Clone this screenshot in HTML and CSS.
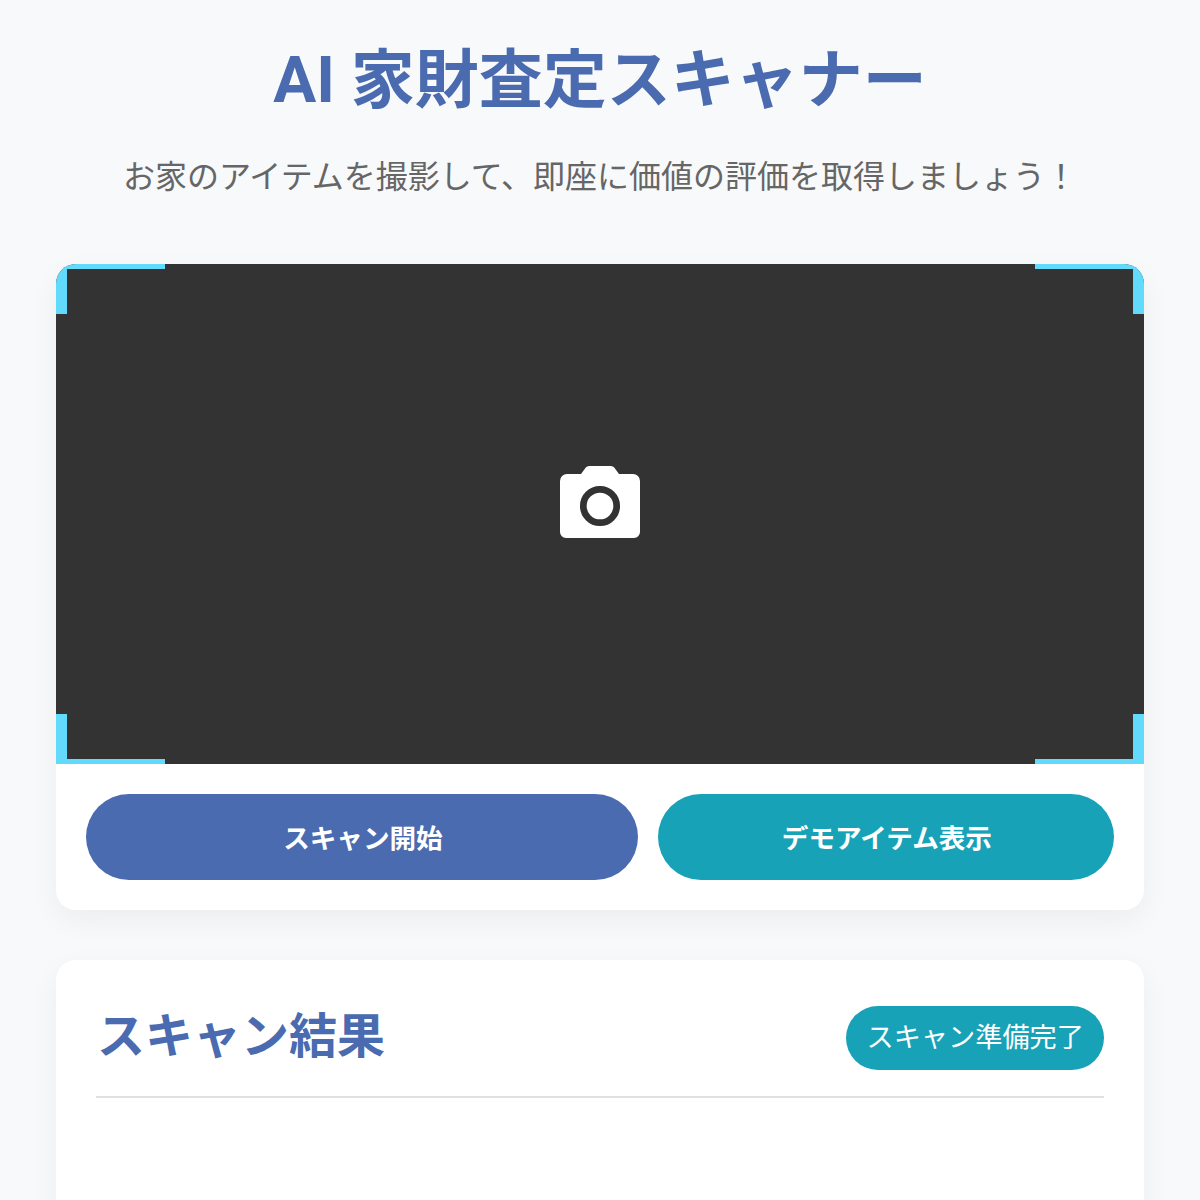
FILE: index.html
```html
<!DOCTYPE html>
<html lang="ja">
<head>
<meta charset="utf-8">
<title>AI 家財査定スキャナー</title>
<link rel="stylesheet" href="styles.css">
</head>
<body>
<div class="container">
  <header class="header">
    <h1 class="title">AI 家財査定スキャナー</h1>
    <p class="subtitle">お家のアイテムを撮影して、即座に価値の評価を取得しましょう！</p>
  </header>
  <section class="scanner">
    <div class="viewport">
      <span class="corner tl"></span>
      <span class="corner tr"></span>
      <span class="corner bl"></span>
      <span class="corner br"></span>
      <svg class="camera" viewBox="0 0 80 72" width="80" height="72" aria-hidden="true">
        <path fill="#fff" d="M29 0h22a4 4 0 0 1 3.200 1.600L59 8h14a7 7 0 0 1 7 7v51a6 6 0 0 1-6 6H6a6 6 0 0 1-6-6V15a7 7 0 0 1 7-7h14l4.800-6.400A4 4 0 0 1 29 0Z"/>
        <circle cx="40" cy="40" r="16.700" fill="none" stroke="#333" stroke-width="6.700"/>
      </svg>
    </div>
    <div class="controls">
      <button class="btn primary">スキャン開始</button>
      <button class="btn secondary">デモアイテム表示</button>
    </div>
  </section>
  <section class="results">
    <div class="results-head">
      <h2 class="results-title">スキャン結果</h2>
      <span class="status">スキャン準備完了</span>
    </div>
  </section>
</div>
</body>
</html>
```
FILE: styles.css
```css
* { box-sizing: border-box; }
html, body { margin: 0; height: 1200px; overflow: hidden; }
body {
  background: #f8f9fa;
  color: #333;
  font-family: "Noto Sans CJK JP", "Liberation Sans", sans-serif;
}
.container { padding: 0 56px; }
.header { text-align: center; padding-top: 35px; margin-bottom: 66px; }
.title {
  margin: 0 0 23px;
  font-family: Roboto, "Noto Sans CJK JP", sans-serif;
  font-size: 64px;
  line-height: 92px;
  font-weight: 700;
  color: #4a6baf;
}
.subtitle { margin: 0; font-size: 32px; line-height: 48px; color: #666; }
.scanner, .results {
  background: #fff;
  border-radius: 20px;
  box-shadow: 0 10px 30px rgba(0, 0, 0, 0.05);
  overflow: hidden;
}
.scanner { margin-bottom: 50px; }
.viewport {
  position: relative;
  height: 500px;
  background: #333;
  display: flex;
  align-items: center;
  justify-content: center;
}
.corner { position: absolute; width: 10%; height: 10%; border: 0 solid #61dafb; }
.tl { top: 0; left: 0; border-width: 5px 0 0 11px; }
.tr { top: 0; right: 0; border-width: 5px 11px 0 0; }
.bl { bottom: 0; left: 0; border-width: 0 0 5px 11px; }
.br { bottom: 0; right: 0; border-width: 0 11px 5px 0; }
.camera { display: block; margin-bottom: 24px; }
.controls { display: flex; gap: 20px; padding: 30px; }
.btn {
  border: 0;
  height: 86px;
  border-radius: 43px;
  color: #fff;
  font-family: inherit;
  font-size: 26.600px;
  font-weight: 700;
  padding: 0 0 2px 2px;
}
.primary { background: #4a6baf; flex: 552 1 0; }
.secondary { background: #17a2b8; flex: 456 1 0; }
.results { height: 400px; padding: 40px; }
.results-head {
  display: flex;
  align-items: center;
  justify-content: space-between;
  padding-bottom: 20px;
  border-bottom: 2px solid #e0e0e0;
}
.results-title { margin: 0 0 12px 1px; font-size: 48px; line-height: 64px; font-weight: 700; color: #4a6baf; }
.status {
  background: #17a2b8;
  color: #fff;
  font-size: 27.200px;
  line-height: 40px;
  padding: 9px 20px 15px;
  border-radius: 32px;
}
```
